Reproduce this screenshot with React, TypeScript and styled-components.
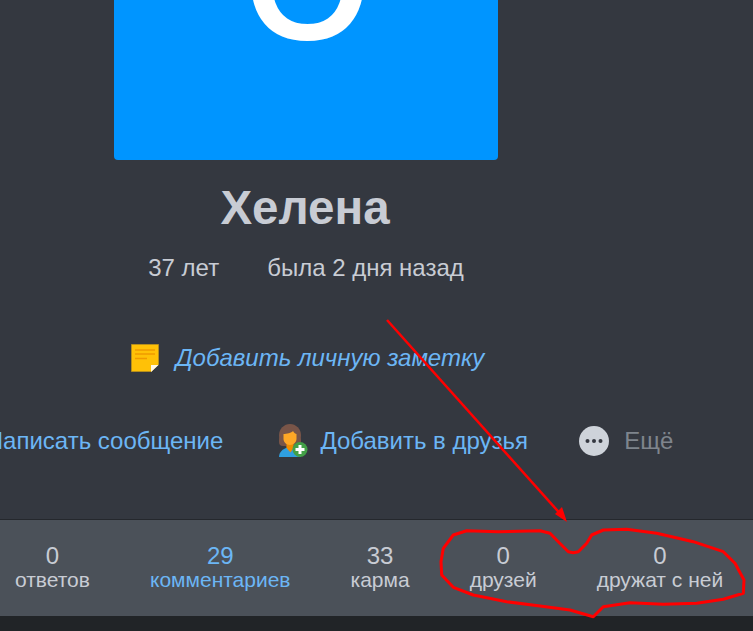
import styled, { createGlobalStyle } from "styled-components";

const GlobalStyle = createGlobalStyle`
  html, body {
    margin: 0;
    padding: 0;
    background: #212427;
  }
`;

const stats = [
  { value: "0", label: "ответов" },
  { value: "29", label: "комментариев", link: true },
  { value: "33", label: "карма" },
  { value: "0", label: "друзей" },
  { value: "0", label: "дружат с ней" },
];

export default function App() {
  return (
    <>
      <GlobalStyle />
      <Page>
        <Profile>
          <Avatar>
            <AvatarLetter>О</AvatarLetter>
          </Avatar>
          <Name>Хелена</Name>
          <Meta>
            <span>37 лет</span>
            <span>была 2 дня назад</span>
          </Meta>
          <Note>
            <NoteIcon />
            <NoteLink>Добавить личную заметку</NoteLink>
          </Note>
          <Actions>
            <Action>
              <IconSlot />
              <ActionText>Написать сообщение</ActionText>
            </Action>
            <Action $gap={12}>
              <FriendIcon />
              <ActionText>Добавить в друзья</ActionText>
            </Action>
            <Action $gap={15} $shift={-4}>
              <MoreIcon />
              <ActionText $muted>Ещё</ActionText>
            </Action>
          </Actions>
        </Profile>
        <StatsBar>
          {stats.map((s) => (
            <Stat key={s.label} $link={s.link}>
              <StatValue>{s.value}</StatValue>
              <StatLabel>{s.label}</StatLabel>
            </Stat>
          ))}
        </StatsBar>
        <Footer />
        <Scribble />
      </Page>
    </>
  );
}

function NoteIcon() {
  return (
    <svg width="29" height="29" viewBox="0 0 29 29">
      <path d="M.5.5h27v20l-7 7H.5z" fill="#ffc107" stroke="#b58e1c" strokeWidth="1" />
      <path d="M4 6h20M4 10h20M4 14.500h12" stroke="#f09a00" strokeWidth="1.500" fill="none" />
      <path d="M20 28v-7h7.500z" fill="#fff8e6" />
    </svg>
  );
}

function FriendIcon() {
  return (
    <svg width="30" height="34" viewBox="0 0 30 34">
      <ellipse cx="12" cy="11.500" rx="11" ry="11.500" fill="#795548" />
      <rect x="1" y="12" width="22" height="10" rx="4" fill="#795548" />
      <path d="M1 33c0-5 4-8 8-9.500h6c4 1.500 8 4.500 8 9.500z" fill="#2f9fe0" />
      <path d="M8.500 20h7v4l-3 4.500-4-4.500z" fill="#f08c00" />
      <path d="M5.500 10c3 0 8-1 9.500-3 1 2 2.500 3 3.500 3 0 0 0 3 0 5 0 3-3 6-6.500 6s-6.500-3-6.500-6z" fill="#ffa726" />
      <circle cx="22" cy="25.500" r="7.500" fill="#43a047" />
      <path d="M22 21v9M17.500 25.500h9" stroke="#fff" strokeWidth="3" fill="none" />
    </svg>
  );
}

function MoreIcon() {
  return (
    <svg width="30" height="30" viewBox="0 0 30 30">
      <circle cx="15" cy="15" r="15" fill="#ced3da" />
      <circle cx="8.500" cy="15" r="2" fill="#343840" />
      <circle cx="15" cy="15" r="2" fill="#343840" />
      <circle cx="21.500" cy="15" r="2" fill="#343840" />
    </svg>
  );
}

function Scribble() {
  return (
    <Overlay viewBox="0 0 753 631">
      <path d="M387 320L564 518" stroke="#ff0000" strokeWidth="2.500" fill="none" />
      <path d="M567 522L555 514L562 507z" fill="#ff0000" />
      <path
        d="M573.300 552.700L568.300 551.700L558.300 541.700L550 533.300L540 530.700L498.300 531.700L466.700 530.700L453.300 535L443.300 548.300L441 561.700L441.700 575L453.300 587.300L473.300 595L506.700 601.700L540 606L570 610L593.300 616.700L603.300 606.700L630 602.700L663.300 604.300L696.700 603.300L723.300 599.300L743.300 593.300L744 580L735 563.300L723.300 551.700L693.300 541.700L656.700 533.300L626.700 529.300L603.300 530L591.700 535L586.700 543.300L578.300 551.700z"
        stroke="#ff0000"
        strokeWidth="3"
        strokeLinejoin="round"
        fill="none"
      />
    </Overlay>
  );
}

const Page = styled.div`
  position: relative;
  width: 753px;
  height: 631px;
  overflow: hidden;
  background: #343840;
  font-family: "Liberation Sans", Arial, sans-serif;
`;

const Profile = styled.section`
  width: 612px;
  height: 519px;
  display: flex;
  flex-direction: column;
  align-items: center;
`;

const Avatar = styled.div`
  width: 384px;
  height: 160px;
  flex-shrink: 0;
  display: flex;
  justify-content: center;
  align-items: flex-end;
  overflow: hidden;
  background: #0095ff;
  border-radius: 0 0 4px 4px;
`;

const AvatarLetter = styled.div`
  margin: 0 0 102px 3px;
  font-family: "Open Sans", sans-serif;
  font-size: 170px;
  font-weight: 600;
  line-height: 170px;
  color: #ffffff;
`;

const Name = styled.h1`
  margin: 21px 2px 0 0;
  font-size: 47.500px;
  line-height: 54px;
  font-weight: 700;
  color: #c8ccd4;
`;

const Meta = styled.div`
  margin-top: 19px;
  display: flex;
  gap: 48px;
  font-size: 24px;
  line-height: 28px;
  color: #c8ccd4;
`;

const Note = styled.div`
  margin: 61px 0 0 3px;
  display: flex;
  align-items: center;
  gap: 16px;
`;

const NoteLink = styled.a`
  font-size: 24px;
  line-height: 30px;
  font-style: italic;
  color: #6cb6f5;
`;

const Actions = styled.div`
  margin-top: 51px;
  display: flex;
  align-items: center;
  justify-content: center;
  gap: 55px;
  white-space: nowrap;
  flex-shrink: 0;
`;

const Action = styled.div<{ $gap?: number; $shift?: number }>`
  display: flex;
  align-items: center;
  gap: ${(p) => p.$gap ?? 14}px;
  height: 34px;
  margin-left: ${(p) => p.$shift ?? 0}px;
`;

const IconSlot = styled.span`
  width: 33px;
  height: 30px;
`;

const ActionText = styled.a<{ $muted?: boolean }>`
  font-size: 24px;
  color: ${(p) => (p.$muted ? "#7f858d" : "#6cb6f5")};
`;

const StatsBar = styled.div`
  height: 94px;
  display: flex;
  align-items: center;
  gap: 60px;
  padding: 0 0 2px 15px;
  background: #4b5159;
  border-top: 1px solid #25282d;
`;

const Stat = styled.div<{ $link?: boolean }>`
  display: flex;
  flex-direction: column;
  align-items: center;
  color: ${(p) => (p.$link ? "#6cb6f5" : "#c8ccd4")};
`;

const StatValue = styled.span`
  font-size: 24px;
  line-height: 25px;
`;

const StatLabel = styled.span`
  font-size: 21px;
  line-height: 24px;
`;

const Footer = styled.div`
  height: 15px;
  background: #212427;
`;

const Overlay = styled.svg`
  position: absolute;
  inset: 0;
  width: 753px;
  height: 631px;
  pointer-events: none;
`;
